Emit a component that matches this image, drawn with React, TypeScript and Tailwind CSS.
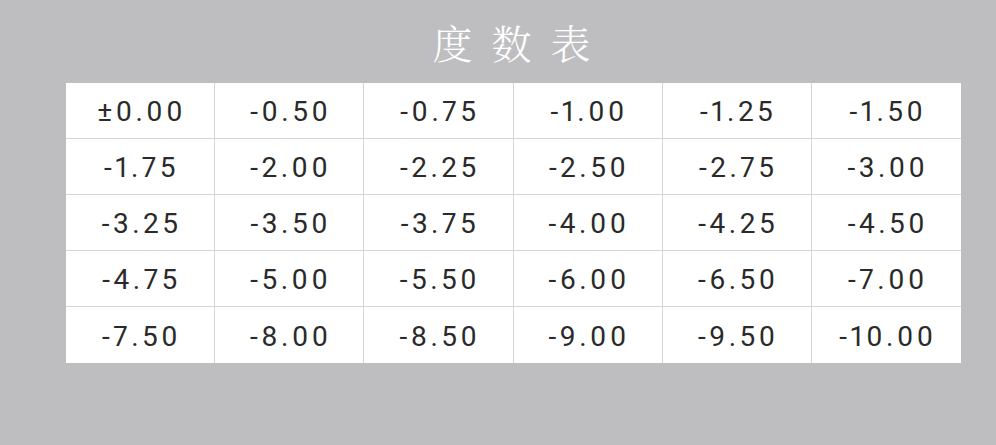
import React from "react";

const rows = [
  ["±0.00", "-0.50", "-0.75", "-1.00", "-1.25", "-1.50"],
  ["-1.75", "-2.00", "-2.25", "-2.50", "-2.75", "-3.00"],
  ["-3.25", "-3.50", "-3.75", "-4.00", "-4.25", "-4.50"],
  ["-4.75", "-5.00", "-5.50", "-6.00", "-6.50", "-7.00"],
  ["-7.50", "-8.00", "-8.50", "-9.00", "-9.50", "-10.00"],
];

export default function App() {
  return (
    <div className="w-[996px] h-[445px] bg-[#bebec0] pt-[15px] pl-[66px]">
      <div className="w-[895px] flex justify-center">
        <h1
          className="text-white text-[40px] leading-[54px] tracking-[19px] pl-[15px] font-light"
          style={{ fontFamily: '"Noto Serif CJK SC", "Noto Sans CJK SC", serif' }}
        >
          度数表
        </h1>
      </div>
      <div
        className="mt-[14px] w-[895px] grid grid-cols-6 bg-white"
        style={{ fontFamily: "Roboto, sans-serif" }}
      >
        {rows.map((r, i) =>
          r.map((v, j) => (
            <div
              key={`${i}-${j}`}
              className={`h-[56px] flex items-center justify-center text-[28px] tracking-[3.5px] pl-[3px] pt-[3px] proportional-nums text-[#2a2a2a] border-[#d4d4d4] ${
                j < 5 ? "border-r" : ""
              } ${i < 4 ? "border-b" : ""}`}
            >
              {v}
            </div>
          ))
        )}
      </div>
    </div>
  );
}
